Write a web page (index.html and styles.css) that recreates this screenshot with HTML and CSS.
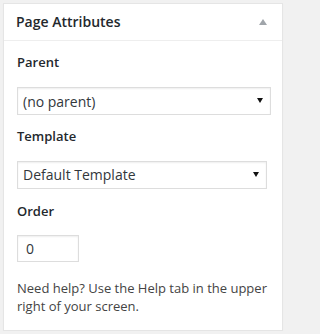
FILE: index.html
```html
<!DOCTYPE html>
<html>
<head>
<meta charset="utf-8">
<link rel="stylesheet" href="styles.css">
</head>
<body>
<div class="postbox">
  <div class="hndle">
    <h2 class="title">Page Attributes</h2>
    <span class="toggle"></span>
  </div>
  <div class="inside">
    <p class="label">Parent</p>
    <div class="select-wrap wide">
      <select class="select"><option>(no parent)</option></select>
    </div>
    <p class="label">Template</p>
    <div class="select-wrap narrow">
      <select class="select"><option>Default Template</option></select>
    </div>
    <p class="label">Order</p>
    <input class="order" type="text" value="0">
    <p class="help">Need help? Use the Help tab in the upper right of your screen.</p>
  </div>
</div>
</body>
</html>
```

FILE: styles.css
```css
html, body {
  margin: 0;
  padding: 0;
}
body {
  background: #f1f1f1;
  padding: 3px 0 0 3px;
  font-family: "Open Sans", "Noto Sans", sans-serif;
  font-size: 13px;
  color: #444;
}
.postbox {
  width: 278px;
  background: #fff;
  border: 1px solid #e5e5e5;
  box-shadow: 0 1px 1px rgba(0,0,0,0.04);
}
.hndle {
  display: flex;
  align-items: center;
  justify-content: space-between;
  border-bottom: 1px solid #eee;
  padding: 8px 15px 8px 12px;
}
.title {
  margin: 0;
  font-size: 14px;
  line-height: 19.6px;
  font-weight: 600;
  color: #23282d;
}
.toggle {
  width: 0;
  height: 0;
  border-left: 4px solid transparent;
  border-right: 4px solid transparent;
  border-bottom: 6px solid #a0a5aa;
  margin-top: 1px;
}
.inside {
  padding: 12px 12px 15px 13px;
}
.label {
  margin: 0;
  font-weight: 600;
  color: #23282d;
  line-height: 19.5px;
}
.select-wrap {
  position: relative;
  margin: 15px 0 12px;
}
.select-wrap.wide { width: 254px; }
.select-wrap.narrow { width: 250px; margin-top: 14px; margin-bottom: 13px; }
.select-wrap::after {
  content: "";
  position: absolute;
  right: 8px;
  top: 11px;
  width: 0;
  height: 0;
  border-left: 3px solid transparent;
  border-right: 3px solid transparent;
  border-top: 5px solid #111;
  pointer-events: none;
}
.select {
  -webkit-appearance: none;
  appearance: none;
  display: block;
  width: 100%;
  height: 28px;
  margin: 0;
  padding: 0 20px 0 5px;
  border: 1px solid #ddd;
  border-radius: 0;
  background: #fff;
  box-shadow: inset 0 1px 2px rgba(0,0,0,0.07);
  font-family: "Open Sans", "Noto Sans", sans-serif;
  font-size: 14px;
  color: #32373c;
  outline: none;
}
.order {
  display: block;
  box-sizing: border-box;
  width: 62px;
  height: 27px;
  margin: 14px 0 17px;
  padding: 0 8px;
  border: 1px solid #ddd;
  border-radius: 0;
  box-shadow: inset 0 1px 2px rgba(0,0,0,0.07);
  font-family: "Open Sans", "Noto Sans", sans-serif;
  font-size: 14px;
  color: #32373c;
  outline: none;
}
.help {
  margin: 0;
  line-height: 18px;
  color: #444;
}
```
